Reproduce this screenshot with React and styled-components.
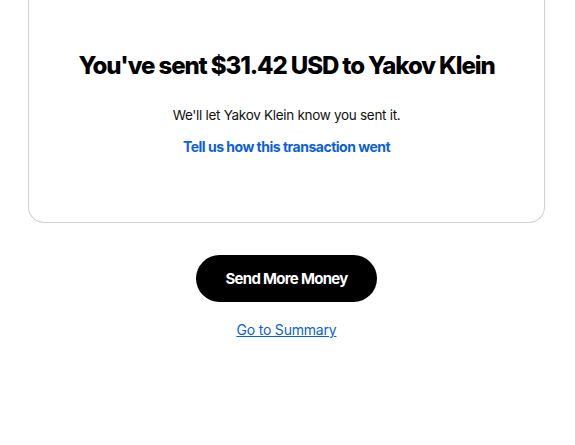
import React from 'react';
import styled, { createGlobalStyle } from 'styled-components';

const GlobalStyle = createGlobalStyle`
  html, body {
    margin: 0;
    padding: 0;
    background: #ffffff;
  }
  body {
    font-family: Inter, "Liberation Sans", Arial, sans-serif;
    color: #000;
  }
`;

const Page = styled.div`
  width: 575px;
  min-height: 445px;
  display: flex;
  flex-direction: column;
  align-items: center;
`;

const Card = styled.div`
  box-sizing: border-box;
  width: 517px;
  height: 223px;
  align-self: flex-start;
  margin-left: 28px;
  border: 1px solid #cfcfcf;
  border-top: none;
  border-radius: 0 0 16px 16px;
  display: flex;
  flex-direction: column;
  align-items: center;
  padding-top: 50px;
`;

const Title = styled.h1`
  margin: 0;
  font-size: 24px;
  font-weight: 800;
  letter-spacing: -1.1px;
  line-height: 32px;
  color: #000;
`;

const Message = styled.p`
  margin: 24px 0 0;
  font-size: 13.5px;
  line-height: 18px;
  letter-spacing: -0.3px;
  color: #111;
`;

const FeedbackLink = styled.a`
  margin-top: 14px;
  font-size: 14px;
  font-weight: 700;
  letter-spacing: -0.5px;
  line-height: 18px;
  color: #0b5fd8;
  text-decoration: none;
  cursor: pointer;
`;

const Actions = styled.div`
  display: flex;
  flex-direction: column;
  align-items: center;
  margin-top: 32px;
  margin-left: -2px;
`;

const PrimaryButton = styled.button`
  width: 181px;
  height: 47px;
  border: none;
  border-radius: 24px;
  background: #000;
  color: #fff;
  font-family: Inter, "Liberation Sans", Arial, sans-serif;
  font-size: 15px;
  font-weight: 700;
  letter-spacing: -0.7px;
  cursor: pointer;
`;

const SummaryLink = styled.a`
  margin-top: 19px;
  font-size: 14px;
  line-height: 18px;
  letter-spacing: -0.2px;
  color: #0b5fd8;
  text-decoration: underline;
  cursor: pointer;
`;

export default function App() {
  return (
    <>
      <GlobalStyle />
      <Page>
        <Card>
          <Title>You've sent $31.42 USD to Yakov Klein</Title>
          <Message>We'll let Yakov Klein know you sent it.</Message>
          <FeedbackLink>Tell us how this transaction went</FeedbackLink>
        </Card>
        <Actions>
          <PrimaryButton>Send More Money</PrimaryButton>
          <SummaryLink>Go to Summary</SummaryLink>
        </Actions>
      </Page>
    </>
  );
}
